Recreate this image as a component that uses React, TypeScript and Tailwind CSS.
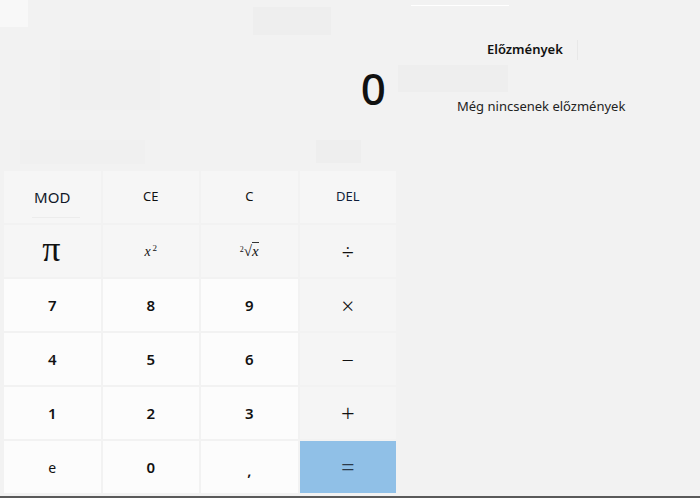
import React from 'react';

type Key = {
  label: React.ReactNode;
  tone: 'top' | 'op' | 'num' | 'eq';
  className?: string;
};

const serif = "font-['Liberation_Serif','DejaVu_Serif',serif]";

const keys: Key[] = [
  { label: 'MOD', tone: 'top', className: 'text-[15px] text-[#101828]' },
  { label: 'CE', tone: 'top', className: 'text-[13px]' },
  { label: 'C', tone: 'top', className: 'text-[13px]' },
  { label: 'DEL', tone: 'top', className: 'text-[13px] text-[#0f1d3a]' },
  { label: 'π', tone: 'top', className: `${serif} text-[36px] leading-none pb-[4px] pr-[2px]` },
  {
    label: (
      <span className={`${serif} italic text-[14px]`}>
        x<sup className="not-italic text-[9px] ml-[2px]">2</sup>
      </span>
    ),
    tone: 'top',
  },
  {
    label: (
      <span className={`${serif} italic text-[15px]`}>
        <sup className="not-italic text-[8px]">2</sup>√<span className="border-t border-[#333] leading-[14px]">x</span>
      </span>
    ),
    tone: 'top',
  },
  { label: '÷', tone: 'op', className: 'text-[22px] font-light' },
  { label: '7', tone: 'num' },
  { label: '8', tone: 'num' },
  { label: '9', tone: 'num' },
  { label: '×', tone: 'op', className: 'text-[22px] font-light' },
  { label: '4', tone: 'num' },
  { label: '5', tone: 'num' },
  { label: '6', tone: 'num' },
  { label: '−', tone: 'op', className: 'text-[22px] font-light' },
  { label: '1', tone: 'num' },
  { label: '2', tone: 'num' },
  { label: '3', tone: 'num' },
  { label: '+', tone: 'op', className: 'text-[24px] font-light' },
  { label: 'e', tone: 'op', className: 'bg-[#fcfcfc] text-[14px]' },
  { label: '0', tone: 'num' },
  { label: ',', tone: 'num', className: 'pt-[6px]' },
  { label: '=', tone: 'eq', className: 'text-[24px] font-light text-[#2b3a4a]' },
];

const toneClass: Record<Key['tone'], string> = {
  top: 'bg-[#f6f6f6]',
  op: 'bg-[#f5f5f5]',
  num: 'bg-[#fcfcfc] text-[15px] font-semibold',
  eq: 'bg-[#90c0e7]',
};

const App: React.FC = () => {
  return (
    <div className="w-[700px] h-[498px] bg-[#f2f2f2] font-['Noto_Sans','Open_Sans',sans-serif] text-[#111] overflow-hidden flex flex-col relative">
      {/* faint blurred leftovers behind the window */}
      <div className="absolute left-0 top-0 w-[28px] h-[27px] bg-[#f8f8f8]" />
      <div className="absolute left-[253px] top-[7px] w-[78px] h-[28px] bg-[#eeeeee]" />
      <div className="absolute left-[411px] top-[5px] w-[98px] h-[1px] bg-white" />
      <div className="absolute left-[60px] top-[50px] w-[100px] h-[60px] bg-[#f0f0f0]" />
      <div className="absolute left-[398px] top-[65px] w-[110px] h-[27px] bg-[#eeeeee]" />
      <div className="absolute left-[20px] top-[140px] w-[125px] h-[24px] bg-[#f0f0f0]" />
      <div className="absolute left-[316px] top-[140px] w-[45px] h-[23px] bg-[#eeeeee]" />
      <div className="absolute left-[577px] top-[40px] w-[1px] h-[20px] bg-[#e8e8e8]" />

      <div className="flex flex-1 relative">
        {/* calculator */}
        <div className="w-[398px] flex flex-col">
          <div className="h-[171px] flex justify-end pr-[12px] pt-[66px]">
            <span className="text-[44px] leading-none font-medium">0</span>
          </div>
          <div className="grid grid-cols-4 grid-rows-[repeat(6,52px)] gap-[2px] pl-[4px] pr-[2px]">
            {keys.map((k, i) => (
              <div
                key={i}
                className={`flex items-center justify-center relative ${toneClass[k.tone]} ${k.className ?? ''}`}
              >
                {k.label}
                {i === 0 && (
                  <span className="absolute left-[28px] bottom-[5px] w-[48px] h-[1px] bg-[#ececec]" />
                )}
              </div>
            ))}
          </div>
        </div>

        {/* history */}
        <div className="flex-1 flex flex-col">
          <div className="pl-[89px] pt-[40px] text-[13px] font-semibold">Előzmények</div>
          <div className="pl-[59px] pt-[37px] text-[13px] text-[#222]">Még nincsenek előzmények</div>
        </div>
      </div>

      <div className="h-[3px]" />
      <div className="h-[2px] bg-[#5a5a5a]" />
    </div>
  );
};

export default App;
